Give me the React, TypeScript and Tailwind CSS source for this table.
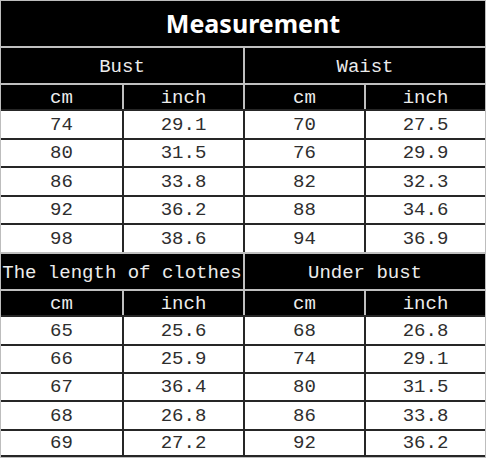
const mono = "font-['Liberation_Mono','DejaVu_Sans_Mono',monospace]";

type Section = {
  left: string;
  right: string;
  rows: [string, string, string, string][];
  heights: number[];
};

const sections: Section[] = [
  {
    left: "Bust",
    right: "Waist",
    rows: [
      ["74", "29.1", "70", "27.5"],
      ["80", "31.5", "76", "29.9"],
      ["86", "33.8", "82", "32.3"],
      ["92", "36.2", "88", "34.6"],
      ["98", "38.6", "94", "36.9"],
    ],
    heights: [29, 28, 29, 28, 29],
  },
  {
    left: "The length of clothes",
    right: "Under bust",
    rows: [
      ["65", "25.6", "68", "26.8"],
      ["66", "25.9", "74", "29.1"],
      ["67", "36.4", "80", "31.5"],
      ["68", "26.8", "86", "33.8"],
      ["69", "27.2", "92", "36.2"],
    ],
    heights: [29, 28, 28, 29, 28],
  },
];

function SizeSection({ section, last }: { section: Section; last: boolean }) {
  return (
    <div>
      <div className="grid h-[37px] grid-cols-2 border-t-2 border-[#bfbfbf] bg-black pt-[4px] text-[#ececec]">
        <div className="flex items-center justify-center whitespace-nowrap">{section.left}</div>
        <div className="-mt-[4px] flex items-center justify-center border-l-2 border-[#bfbfbf] pt-[4px]">
          {section.right}
        </div>
      </div>
      <div className="grid h-[26px] grid-cols-4 border-t-2 border-[#bfbfbf] bg-black text-[#ececec]">
        {["cm", "inch", "cm", "inch"].map((u, i) => (
          <div
            key={i}
            className={`flex items-center justify-center pt-[2px] leading-none ${i > 0 ? "border-l-2 border-[#bfbfbf]" : ""}`}
          >
            {u}
          </div>
        ))}
      </div>
      {section.rows.map((r, ri) => (
        <div
          key={ri}
          style={{ height: section.heights[ri] }}
          className={`grid grid-cols-4 border-t-2 border-[#262626] bg-white text-[#2e2e2e] ${
            last && ri === section.rows.length - 1 ? "border-b-2" : ""
          }`}
        >
          {r.map((v, i) => (
            <div
              key={i}
              className={`flex items-center justify-center pt-[1px] leading-none ${i > 0 ? "border-l-2 border-[#262626]" : ""}`}
            >
              {v}
            </div>
          ))}
        </div>
      ))}
    </div>
  );
}

export default function App() {
  return (
    <div className="h-[461px] w-[488px] bg-white">
      <div className={`w-[486px] border border-[#bdbdbd] bg-black text-[19px] ${mono}`}>
        <div className="flex h-[45px] items-center justify-center pl-[20px] font-['Noto_Sans','Open_Sans',sans-serif] text-[25px] font-bold text-white">
          Measurement
        </div>
        {sections.map((s, i) => (
          <SizeSection key={i} section={s} last={i === sections.length - 1} />
        ))}
      </div>
    </div>
  );
}
